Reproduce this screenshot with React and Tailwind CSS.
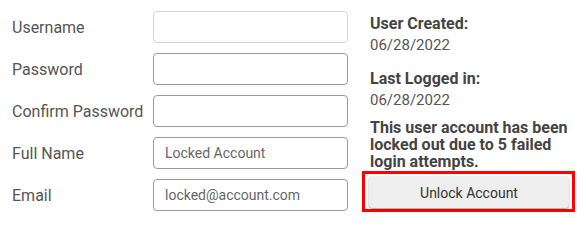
import React from "react";

const rows = [
  { label: "Username", value: "", light: true },
  { label: "Password", value: "" },
  { label: "Confirm Password", value: "" },
  { label: "Full Name", value: "Locked Account" },
  { label: "Email", value: "locked@account.com" },
];

export default function App() {
  return (
    <div
      className="flex bg-white w-[586px] h-[223px] text-[#555]"
      style={{ fontFamily: "Roboto, 'Liberation Sans', sans-serif" }}
    >
      <div className="flex flex-col gap-[10px] pt-[11px] pl-[12px]">
        {rows.map((r) => (
          <div key={r.label} className="flex items-center h-8">
            <div className="w-[141px] text-[16px] leading-5 pt-px">{r.label}</div>
            <div
              className={`w-[195px] h-8 rounded-[4px] border ${
                r.light ? "border-[#d4d4d4]" : "border-[#999]"
              } flex items-center px-[11px] text-[14px] text-[#666]`}
            >
              {r.value}
            </div>
          </div>
        ))}
      </div>
      <div className="flex flex-col pl-[22px] pt-[13px]">
        <div className="text-[16px] font-bold leading-[21px] text-[#444]">User Created:</div>
        <div className="text-[15px] leading-[22px]">06/28/2022</div>
        <div className="text-[16px] font-bold leading-[21px] mt-3 text-[#444]">Last Logged in:</div>
        <div className="text-[15px] leading-[22px]">06/28/2022</div>
        <div className="text-[16px] font-bold leading-[17px] mt-[8px] text-[#444] w-[205px]">
          This user account has been locked out due to 5 failed login attempts.
        </div>
        <div className="mt-px -ml-[8px] w-[213px] border-[3px] border-[#ff0000] pt-[2px] pb-[1px] pl-[4px] pr-[3px]">
          <button className="w-[200px] h-8 rounded-[4px] bg-[#eeeeee] text-[14px] text-[#333] shadow-[0_1px_2px_rgba(0,0,0,0.4)] pt-[3px]">
            Unlock Account
          </button>
        </div>
      </div>
    </div>
  );
}
